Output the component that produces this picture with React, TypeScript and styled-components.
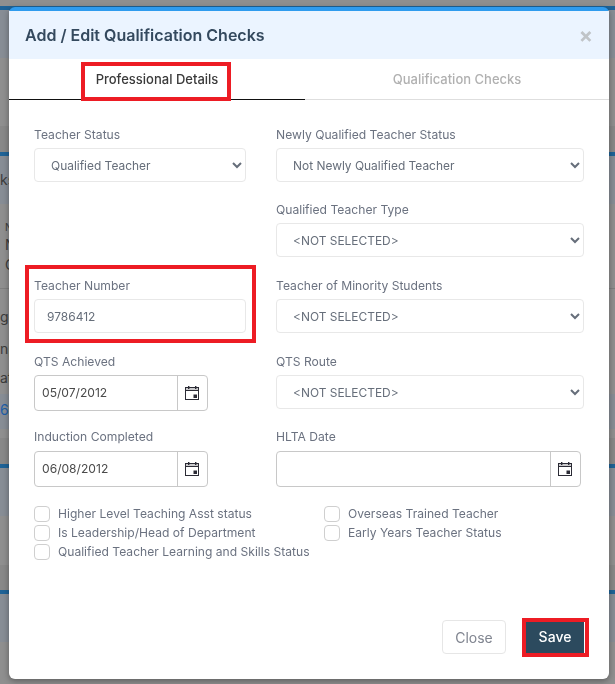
import React from "react";
import styled, { createGlobalStyle } from "styled-components";

const GlobalStyle = createGlobalStyle`
  html, body {
    margin: 0;
    height: 100%;
    overflow: hidden;
    font-family: Inter, "Liberation Sans", sans-serif;
  }
`;

const Page = styled.div`
  height: 684px;
  overflow: hidden;
  background: #8f8f8f;
`;

const bandColors: Record<string, string> = {
  plain: "#8f8f8f",
  dark: "#888888",
  blue: "#1f6397",
  tint: "#878d95",
};

const Band = styled.div<{ $tone: string; $h: number }>`
  height: ${(p) => p.$h}px;
  box-sizing: border-box;
  background: ${(p) => bandColors[p.$tone]};
  display: flex;
  flex-direction: column;
  overflow: hidden;
`;

const Fragment = styled.div<{ $top: number; $size: number; $x?: number; $color?: string }>`
  margin-top: ${(p) => p.$top}px;
  padding-left: ${(p) => p.$x ?? 0}px;
  font-size: ${(p) => p.$size}px;
  line-height: 16px;
  color: ${(p) => p.$color ?? "#3c3c3c"};
  white-space: nowrap;
`;

const Rule = styled.div`
  height: 1px;
  background: #7f7f7f;
`;

const Overlay = styled.div`
  position: fixed;
  inset: 0;
`;

const Modal = styled.div`
  position: absolute;
  left: 9px;
  top: 7px;
  width: 600px;
  height: 672px;
  box-sizing: border-box;
  background: #fff;
  border-top: 4px solid #2f9bee;
  border-radius: 6px;
  box-shadow: 0 2px 6px rgba(0, 0, 0, 0.35);
  display: flex;
  flex-direction: column;
`;

const Header = styled.div`
  height: 48px;
  flex: none;
  box-sizing: border-box;
  padding: 0 16px;
  background: #ebf4ff;
  display: flex;
  align-items: center;
  justify-content: space-between;
`;

const Title = styled.div`
  font-size: 16px;
  font-weight: 600;
  color: #34495e;
`;

const CloseX = styled.span`
  font-size: 21px;
  font-weight: 700;
  line-height: 1;
  color: #c0c4c8;
`;

const Tabs = styled.div`
  display: flex;
  height: 41px;
  flex: none;
`;

const Tab = styled.div<{ $active?: boolean }>`
  flex: ${(p) => (p.$active ? "0 0 296px" : "1")};
  display: flex;
  justify-content: center;
  padding-top: 12px;
  box-sizing: border-box;
  font-size: 13px;
  line-height: 16px;
  font-weight: 500;
  color: ${(p) => (p.$active ? "#3a3a3a" : "#b0b0b0")};
  border-bottom: ${(p) => (p.$active ? "1px solid #111" : "1px solid #dedede")};
`;

const Marked = styled.div`
  position: absolute;
  box-sizing: border-box;
  border: 4px solid #ed1c24;
  pointer-events: none;
`;

const TabMark = styled(Marked)`
  left: 72px;
  top: 51px;
  width: 150px;
  height: 39px;
`;

const NumberMark = styled(Marked)`
  left: 16px;
  top: 254px;
  width: 231px;
  height: 78px;
`;

const SaveMark = styled(Marked)`
  left: 513px;
  top: 607px;
  width: 67px;
  height: 39px;
`;

const Form = styled.div`
  flex: 1;
  padding: 27px 25px 0;
  display: grid;
  grid-template-columns: 212px 308px;
  grid-template-rows: 55px 56px 56px 55px auto auto;
  column-gap: 30px;
  row-gap: 20px;
  align-content: start;
`;

const Field = styled.div`
  display: flex;
  flex-direction: column;
`;

const Label = styled.label<{ $gap?: number }>`
  font-size: 12.13px;
  line-height: 16px;
  margin-bottom: ${(p) => p.$gap ?? 5}px;
  color: #6b7280;
`;

const Select = styled.select`
  height: 34px;
  width: 100%;
  flex: none;
  box-sizing: border-box;
  padding: 0 12px;
  background: #fff;
  border: 1px solid #e8e8e8;
  border-radius: 4px;
  font-family: inherit;
  font-size: 11.95px;
  color: #666e7a;
`;

const TextInput = styled.input`
  height: 34px;
  flex: none;
  box-sizing: border-box;
  padding: 0 12px;
  border: 1px solid #e8e8e8;
  border-radius: 4px;
  font-family: inherit;
  font-size: 12px;
  color: #666e7a;
`;

const DateGroup = styled.div<{ $width: number }>`
  width: ${(p) => p.$width}px;
  height: 36px;
  flex: none;
  box-sizing: border-box;
  display: flex;
  border: 1px solid #c8c8c8;
  border-radius: 4px;
`;

const DateInput = styled.input`
  flex: 1;
  min-width: 0;
  border: 0;
  outline: 0;
  background: transparent;
  padding: 0 7px 2px;
  font-family: inherit;
  font-size: 12.1px;
  color: #4a4a4a;
`;

const DateButton = styled.div`
  flex: 0 0 29px;
  border-left: 1px solid #c8c8c8;
  display: flex;
  align-items: center;
  justify-content: center;
`;

const Checks = styled.div`
  grid-column: 1 / -1;
  margin-top: -3px;
  display: grid;
  grid-template-columns: 290px 1fr;
  grid-auto-rows: 19px;
`;

const CheckRow = styled.label`
  display: flex;
  align-items: center;
  gap: 8px;
  font-size: 12.1px;
  color: #6b7280;
  white-space: nowrap;
`;

const Box = styled.span`
  flex: none;
  width: 16px;
  height: 16px;
  box-sizing: border-box;
  border: 1px solid #cfcfcf;
  border-radius: 4px;
  background: #fff;
`;

const Footer = styled.div`
  flex: none;
  height: 59px;
  padding-right: 25px;
  display: flex;
  align-items: flex-start;
  justify-content: flex-end;
  gap: 20px;
`;

const CloseButton = styled.button`
  width: 64px;
  height: 34px;
  box-sizing: border-box;
  background: #fff;
  border: 1px solid #e6e6e6;
  border-radius: 4px;
  font-family: inherit;
  font-size: 14px;
  color: #808590;
`;

const SaveButton = styled.button`
  width: 58px;
  height: 31px;
  margin-top: 2px;
  padding: 0 0 2px;
  box-sizing: border-box;
  background: #2c4a5e;
  border: 0;
  font-family: inherit;
  font-size: 14px;
  font-weight: 500;
  color: #fff;
`;

const CalendarIcon = () => (
  <svg width="15" height="16" viewBox="0 0 15 16" fill="none">
    <rect x="0.5" y="2.5" width="13" height="12" stroke="#2b2b35" />
    <rect x="0.5" y="2.5" width="13" height="3" fill="#2b2b35" fillOpacity="0.25" stroke="#2b2b35" />
    <rect x="3" y="1" width="1.4" height="3" fill="#2b2b35" />
    <rect x="10" y="1" width="1.4" height="3" fill="#2b2b35" />
    <rect x="8.5" y="9.5" width="3.5" height="3.5" fill="#2b2b35" />
  </svg>
);

const NOT_SELECTED = "<NOT SELECTED>";

const Choice = ({ value }: { value: string }) => (
  <Select defaultValue={value}>
    <option>{value}</option>
  </Select>
);

const Backdrop = () => (
  <div>
    <Band $tone="plain" $h={6} />
    <Band $tone="blue" $h={4} />
    <Band $tone="tint" $h={48} />
    <Band $tone="plain" $h={68} />
    <Band $tone="dark" $h={26} />
    <Band $tone="blue" $h={4} />
    <Band $tone="tint" $h={48}>
      <Fragment $top={16} $size={14}>ks</Fragment>
    </Band>
    <Band $tone="plain" $h={84}>
      <Fragment $top={15} $size={10} $x={5}>N</Fragment>
      <Fragment $top={2} $size={14} $x={5}>N</Fragment>
      <Fragment $top={4} $size={14} $x={5}>C</Fragment>
    </Band>
    <Rule />
    <Band $tone="plain" $h={105}>
      <Fragment $top={20} $size={14}>ge</Fragment>
      <Fragment $top={16} $size={14}>np</Fragment>
      <Fragment $top={13} $size={14}>at</Fragment>
    </Band>
    <Band $tone="tint" $h={35}>
      <Fragment $top={8} $size={14} $color="#1f5fa8">6,</Fragment>
    </Band>
    <Band $tone="plain" $h={9} />
    <Band $tone="dark" $h={26} />
    <Band $tone="blue" $h={4} />
    <Band $tone="tint" $h={48} />
    <Band $tone="plain" $h={49} />
    <Band $tone="dark" $h={25} />
    <Band $tone="blue" $h={4} />
    <Band $tone="tint" $h={48} />
    <Band $tone="plain" $h={41} />
  </div>
);

const App = () => {
  return (
    <Page>
      <GlobalStyle />
      <Backdrop />
      <Overlay>
        <Modal>
          <Header>
            <Title>Add / Edit Qualification Checks</Title>
            <CloseX>×</CloseX>
          </Header>
          <Tabs>
            <Tab $active>Professional Details</Tab>
            <Tab>Qualification Checks</Tab>
          </Tabs>
          <Form>
            <Field>
              <Label>Teacher Status</Label>
              <Choice value="Qualified Teacher" />
            </Field>
            <Field>
              <Label>Newly Qualified Teacher Status</Label>
              <Choice value="Not Newly Qualified Teacher" />
            </Field>
            <div />
            <Field>
              <Label>Qualified Teacher Type</Label>
              <Choice value={NOT_SELECTED} />
            </Field>
            <Field>
              <Label>Teacher Number</Label>
              <TextInput defaultValue="9786412" />
            </Field>
            <Field>
              <Label>Teacher of Minority Students</Label>
              <Choice value={NOT_SELECTED} />
            </Field>
            <Field>
              <Label>QTS Achieved</Label>
              <DateGroup $width={174}>
                <DateInput defaultValue="05/07/2012" />
                <DateButton><CalendarIcon /></DateButton>
              </DateGroup>
            </Field>
            <Field>
              <Label>QTS Route</Label>
              <Choice value={NOT_SELECTED} />
            </Field>
            <Field>
              <Label $gap={6}>Induction Completed</Label>
              <DateGroup $width={174}>
                <DateInput defaultValue="06/08/2012" />
                <DateButton><CalendarIcon /></DateButton>
              </DateGroup>
            </Field>
            <Field>
              <Label $gap={6}>HLTA Date</Label>
              <DateGroup $width={305}>
                <DateInput />
                <DateButton><CalendarIcon /></DateButton>
              </DateGroup>
            </Field>
            <Checks>
              <CheckRow><Box />Higher Level Teaching Asst status</CheckRow>
              <CheckRow><Box />Overseas Trained Teacher</CheckRow>
              <CheckRow><Box />Is Leadership/Head of Department</CheckRow>
              <CheckRow><Box />Early Years Teacher Status</CheckRow>
              <CheckRow><Box />Qualified Teacher Learning and Skills Status</CheckRow>
            </Checks>
          </Form>
          <Footer>
            <CloseButton>Close</CloseButton>
            <SaveButton>Save</SaveButton>
          </Footer>
          <TabMark />
          <NumberMark />
          <SaveMark />
        </Modal>
      </Overlay>
    </Page>
  );
};

export default App;
